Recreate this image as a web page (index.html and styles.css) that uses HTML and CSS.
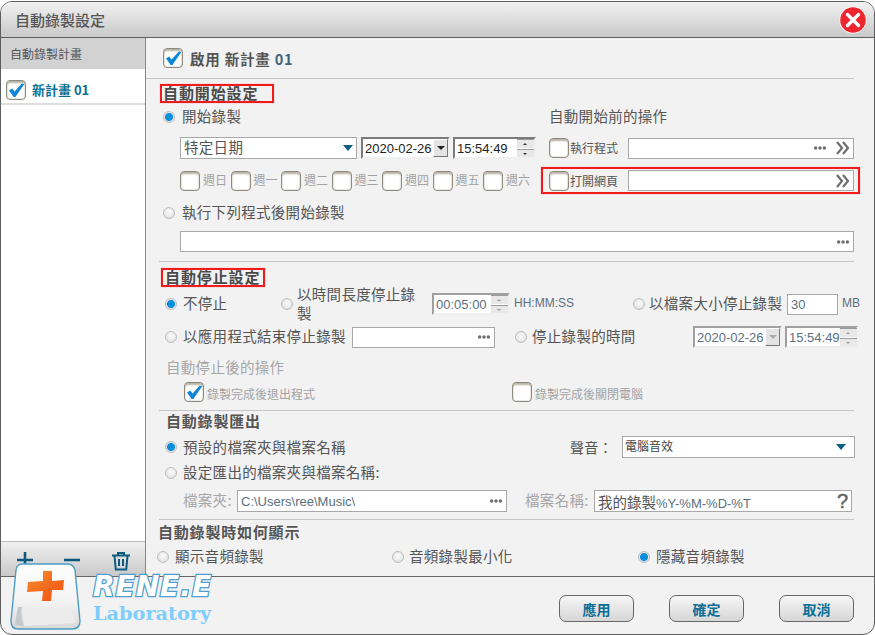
FILE: index.html
```html
<!DOCTYPE html>
<html lang="zh-Hant">
<head>
    <meta charset="UTF-8">
    <title>自動錄製設定</title>
    <link rel="stylesheet" href="styles.css">
</head>
<body>

<svg class="defs" width="0" height="0">
    <symbol id="tick" viewBox="0 0 20 20">
        <path d="M3 10.5 L6.2 8.5 L8.6 11.5 L15.8 3.6 L18.2 4.2 L9.4 17 L7.6 17 Z" fill="#0f86d6"/>
    </symbol>
    <symbol id="dots" viewBox="0 0 16 6">
        <circle cx="3" cy="3" r="2"/><circle cx="8" cy="3" r="2"/><circle cx="13" cy="3" r="2"/>
    </symbol>
    <symbol id="chevrons" viewBox="0 0 14 14">
        <path d="M1 1 L6 7 L1 13 M7 1 L12 7 L7 13" fill="none" stroke="#6e6e6e" stroke-width="2.2"/>
    </symbol>
</svg>

<div class="window">

    <div class="titlebar">
        <span class="title">自動錄製設定</span>
        <span class="close">
            <svg width="28" height="28" viewBox="0 0 28 28">
                <circle cx="14" cy="14" r="13.5" fill="#fff"/>
                <circle cx="14" cy="14" r="12.8" fill="#f0262e"/>
                <path d="M8.5 8.5 L19.5 19.5 M19.5 8.5 L8.5 19.5" stroke="#fff" stroke-width="3.4" stroke-linecap="round"/>
            </svg>
        </span>
    </div>

    <div class="content">

        <!-- Plan list -->
        <div class="sidebar">
            <div class="side-head">自動錄製計畫</div>
            <div class="plan">
                <span class="check"><svg><use href="#tick"/></svg></span>
                <span class="plan-name">新計畫 01</span>
            </div>
            <div class="side-tools">
                <svg class="tool-plus" width="18" height="18" viewBox="0 0 18 18"><path d="M9 1 V17 M1 9 H17" stroke="#0c5a7e" stroke-width="2.6"/></svg>
                <svg class="tool-minus" width="18" height="18" viewBox="0 0 18 18"><path d="M1 9 H17" stroke="#0c5a7e" stroke-width="2.6"/></svg>
                <svg class="tool-trash" width="20" height="20" viewBox="0 0 20 20"><path d="M1 4.5 H19 M7 4 V2 H13 V4 M3.5 5 L4.8 18.5 H15.2 L16.5 5 M8 8 V15 M12 8 V15" fill="none" stroke="#0c5a7e" stroke-width="2"/></svg>
            </div>
        </div>

        <div class="main">

            <div class="enable-row">
                <span class="check"><svg><use href="#tick"/></svg></span>
                <span class="enable-text">啟用 新計畫 <em>01</em></span>
            </div>

            <!-- Auto start -->
            <div class="heading heading-start"><span>自動開始設定</span></div>

            <div class="start-row">
                <span class="radio on"></span>
                <span class="start-label">開始錄製</span>
                <span>自動開始前的操作</span>
            </div>

            <div class="date-row">
                <div class="select select-date"><span>特定日期</span><i class="arrow"></i></div>
                <div class="field date"><span>2020-02-26</span><b class="drop"><i></i></b></div>
                <div class="field time"><span>15:54:49</span><b class="spin"><i class="up"></i><i class="down"></i></b></div>
                <div class="action">
                    <span class="check"></span>
                    <span class="action-label">執行程式</span>
                    <div class="input">
                        <svg class="dots"><use href="#dots"/></svg>
                        <svg class="chevrons"><use href="#chevrons"/></svg>
                    </div>
                </div>
            </div>

            <div class="week-row">
                <div class="week">
                    <div class="day"><span class="check"></span><span>週日</span></div>
                    <div class="day"><span class="check"></span><span>週一</span></div>
                    <div class="day"><span class="check"></span><span>週二</span></div>
                    <div class="day"><span class="check"></span><span>週三</span></div>
                    <div class="day"><span class="check"></span><span>週四</span></div>
                    <div class="day"><span class="check"></span><span>週五</span></div>
                    <div class="day"><span class="check"></span><span>週六</span></div>
                </div>
                <div class="action action-marked">
                    <span class="check"></span>
                    <span class="action-label">打開網頁</span>
                    <div class="input">
                        <svg class="chevrons"><use href="#chevrons"/></svg>
                    </div>
                </div>
            </div>

            <div class="after-row">
                <span class="radio"></span>
                <span>執行下列程式後開始錄製</span>
            </div>

            <div class="input after-input"><svg class="dots"><use href="#dots"/></svg></div>

            <hr class="rule rule-stop">

            <!-- Auto stop -->
            <div class="heading heading-stop"><span>自動停止設定</span></div>

            <div class="stop-row">
                <span class="radio on"></span>
                <span>不停止</span>
                <span class="radio"></span>
                <span class="wrap-label">以時間長度停止錄製</span>
                <div class="field length disabled"><span>00:05:00</span><b class="spin"><i class="up"></i><i class="down"></i></b></div>
                <span class="unit">HH:MM:SS</span>
                <span class="radio"></span>
                <span>以檔案大小停止錄製</span>
                <div class="input size">30</div>
                <span class="unit">MB</span>
            </div>

            <div class="stop-row2">
                <span class="radio"></span>
                <span>以應用程式結束停止錄製</span>
                <div class="input"><svg class="dots"><use href="#dots"/></svg></div>
                <span></span>
                <span class="radio"></span>
                <span>停止錄製的時間</span>
                <div class="field date disabled"><span>2020-02-26</span><b class="drop"><i></i></b></div>
                <div class="field time-small disabled"><span>15:54:49</span><b class="spin"><i class="up"></i><i class="down"></i></b></div>
            </div>

            <div class="after-stop">自動停止後的操作</div>

            <div class="quit-row">
                <div class="quit quit-exit">
                    <span class="check"><svg><use href="#tick"/></svg></span>
                    <span>錄製完成後退出程式</span>
                </div>
                <div class="quit">
                    <span class="check"></span>
                    <span>錄製完成後關閉電腦</span>
                </div>
            </div>

            <hr class="rule rule-export">

            <!-- Export -->
            <div class="heading2 heading-export">自動錄製匯出</div>

            <div class="export-row">
                <span class="radio on"></span>
                <span>預設的檔案夾與檔案名稱</span>
                <span class="sound-label">聲音：</span>
                <div class="select select-sound"><span>電腦音效</span><i class="arrow"></i></div>
            </div>

            <div class="export-row2">
                <span class="radio"></span>
                <span>設定匯出的檔案夾與檔案名稱:</span>
            </div>

            <div class="path-row">
                <span class="muted">檔案夾:</span>
                <div class="input path"><span>C:\Users\ree\Music\</span><svg class="dots"><use href="#dots"/></svg></div>
                <span class="muted">檔案名稱:</span>
                <div class="input path"><span><span class="name-cjk">我的錄製</span>%Y-%M-%D-%T</span><b class="help">?</b></div>
            </div>

            <hr class="rule rule-show">

            <!-- Display -->
            <div class="heading2 heading-show">自動錄製時如何顯示</div>

            <div class="show-row">
                <span class="radio"></span>
                <span>顯示音頻錄製</span>
                <span class="radio"></span>
                <span>音頻錄製最小化</span>
                <span class="radio on"></span>
                <span>隱藏音頻錄製</span>
            </div>

        </div>
    </div>

    <div class="footer">
        <button>應用</button>
        <button>確定</button>
        <button>取消</button>
    </div>

    <!-- Watermark over the corner -->
    <div class="logo">
        <svg class="logo-key" width="72" height="68" viewBox="0 0 72 68">
            <defs>
                <linearGradient id="cap" x1="0" y1="0" x2="0" y2="1">
                    <stop offset="0" stop-color="#ffffff"/>
                    <stop offset="0.6" stop-color="#f2f2f2"/>
                    <stop offset="1" stop-color="#d8d8d8"/>
                </linearGradient>
                <linearGradient id="plus" x1="0" y1="0" x2="1" y2="1">
                    <stop offset="0" stop-color="#f98a2e"/>
                    <stop offset="1" stop-color="#ee4f12"/>
                </linearGradient>
            </defs>
            <path d="M12 1 H58 Q63 1 65 7 L70 58 Q70 66 62 66 H8 Q1 66 1 58 L6 7 Q7 1 12 1 Z" fill="url(#cap)" stroke="#4c9cc6" stroke-width="1.4"/>
            <path d="M8 44 Q6 54 5 62 L14 63 Q10 52 12 44 Z" fill="#c4c8cc"/>
            <path d="M12 44 Q36 50 61 44 L66 60 L14 63 Z" fill="#ececec"/>
            <path d="M33 8 H42 V18 L54 17 L53 27 H42 L41 38 H32 L33 28 L17 29 L18 19 L33 18 Z" fill="url(#plus)"/>
        </svg>
        <div class="logo-text">
            <div class="logo-name">RENE.E</div>
            <div class="logo-lab">Laboratory</div>
        </div>
    </div>

</div>

</body>
</html>
```

FILE: styles.css
```css
* {
    box-sizing: border-box;
}

html, body {
    margin: 0;
    background-color: #fff;
}

body {
    padding-top: 1px;
    font-family: "Noto Sans CJK TC", "Liberation Sans", sans-serif;
    font-size: 14.5px;
    color: #555;
}

.defs {
    position: absolute;
}

.window {
    position: relative;
    width: 875px;
    height: 634px;
    border: 1px solid #5e5e5e;
    border-radius: 12px;
    background-color: #f2f2f2;
    overflow: hidden;
}

.titlebar {
    display: flex;
    align-items: center;
    justify-content: space-between;
    height: 36px;
    padding: 0 7px 0 14px;
    background: linear-gradient(#f1f1f1, #c9c9c9);
    border-bottom: 1px solid #5e5e5e;
}

.title {
    font-size: 15px;
    font-weight: 500;
    color: #555;
}

.close {
    display: flex;
}

.content {
    display: flex;
    height: 538px;
}

/* sidebar */
.sidebar {
    display: flex;
    flex-direction: column;
    width: 145px;
    background-color: #fff;
    border-right: 1px solid #888;
}

.side-head {
    height: 31px;
    padding-left: 9px;
    line-height: 31px;
    font-size: 12px;
    background-color: #d2d2d2;
}

.plan {
    display: flex;
    align-items: center;
    gap: 6px;
    height: 36px;
    padding: 7px 0 0 5px;
    border-bottom: 2px solid #dedede;
}

.plan-name {
    font-size: 13px;
    font-weight: 700;
    color: #0c6f96;
}

.side-tools {
    display: flex;
    margin-top: auto;
    height: 35px;
    padding: 9px 0 0 15px;
    background: linear-gradient(#f0f0f0, #c9c9c9);
    border-top: 1px solid #bbb;
}

.tool-minus {
    margin-left: 29px;
}

.tool-trash {
    margin-left: 30px;
}

/* main panel */
.main {
    width: 728px;
    letter-spacing: 0.3px;
}

.enable-row {
    display: flex;
    align-items: center;
    gap: 7px;
    height: 41px;
    width: 708px;
    padding-left: 17px;
    border-bottom: 1px solid #c6c6c6;
}

.enable-text {
    font-size: 14.5px;
    font-weight: 700;
    letter-spacing: 0.8px;
    color: #555;
}

.enable-text em {
    font-style: normal;
    color: #41647a;
}

.rule {
    height: 1px;
    width: 695px;
    margin-left: 13px;
    margin-right: 0;
    border: 0;
    background-color: #c6c6c6;
}

.rule-stop {
    margin-top: 9px;
    margin-bottom: 0;
}

.rule-export {
    margin-top: 8px;
    margin-bottom: 0;
}

.rule-show {
    margin-top: 7px;
    margin-bottom: 0;
}

.heading {
    height: 19px;
    font-size: 15px;
    font-weight: 700;
    line-height: 13px;
    letter-spacing: 0.9px;
    color: #4a4a4a;
    border: 2px solid #f01c1c;
    box-shadow: 0 0 1px #f58a8a;
}

.heading-start {
    width: 114px;
    margin: 5px 0 0 14px;
    padding-left: 1px;
}

.heading-stop {
    width: 104px;
    margin: 6px 0 0 15px;
    padding-left: 2px;
}

.heading2 {
    height: 20px;
    font-size: 15px;
    font-weight: 700;
    line-height: 18px;
    letter-spacing: 0.8px;
    color: #555;
}

.heading-export {
    margin: 1px 0 0 20px;
}

.heading-show {
    margin: 3px 0 0 12px;
}

/* radios and checks */
.radio {
    width: 12px;
    height: 12px;
    border-radius: 50%;
    border: 1px solid #bdbdbd;
    background: radial-gradient(circle at 50% 40%, #fbfbfb, #dcdcdc);
}

.radio.on {
    background: radial-gradient(circle, #0a8fe0 0, #0a8fe0 3.6px, #e6e6e6 4.4px);
}

.check {
    display: block;
    flex: none;
    width: 20px;
    height: 20px;
    border: 1px solid #8f8a7e;
    border-radius: 4px;
    background-color: #fff;
    box-shadow: inset 0 2px 2px #b5b0a4, inset 0 -1px 1px #e8e8e8;
}

.check svg {
    display: block;
    width: 20px;
    height: 20px;
    margin: -1px 0 0 -1px;
}

/* text sits a little low in its line box, lift it to the control's centre */
.start-row > span,
.after-row > span,
.stop-row > span,
.stop-row2 > span,
.export-row2 > span,
.show-row > span,
.path-row > .muted,
.select > span,
.day > span {
    padding-bottom: 3px;
}

.export-row > span,
.action-label {
    padding-bottom: 1px;
}

.quit > span {
    padding-top: 2px;
}

.radio,
.start-row > .radio,
.after-row > .radio,
.stop-row > .radio,
.stop-row2 > .radio,
.export-row > .radio,
.export-row2 > .radio,
.show-row > .radio,
.day > .check,
.quit > .check {
    padding: 0;
}

/* form fields */
.input {
    display: flex;
    align-items: center;
    justify-content: flex-end;
    height: 21px;
    padding: 0 3px;
    font-size: 13px;
    letter-spacing: 0;
    color: #5c6f80;
    background-color: #fff;
    border: 1px solid #a8a8a8;
}

.dots {
    flex: none;
    width: 14px;
    height: 6px;
    fill: #6e6e6e;
}

.chevrons {
    flex: none;
    width: 14px;
    height: 14px;
    margin-left: 9px;
}

.select {
    display: flex;
    align-items: center;
    justify-content: space-between;
    background-color: #fff;
    border: 1px solid #a8a8a8;
}

.arrow {
    width: 0;
    height: 0;
    border-left: 5px solid transparent;
    border-right: 5px solid transparent;
    border-top: 6px solid #0c5f86;
}

.select-date {
    width: 177px;
    height: 22px;
    padding: 0 3px;
    font-size: 14.5px;
}

.select-sound {
    width: 233px;
    height: 22px;
    padding: 0 8px 0 2px;
    font-size: 12px;
    letter-spacing: 0;
    color: #444;
}

.field {
    display: flex;
    align-items: center;
    height: 22px;
    padding-left: 2px;
    font-family: "Liberation Sans", sans-serif;
    font-size: 13px;
    letter-spacing: 0;
    white-space: nowrap;
    color: #222;
    background-color: #fff;
    border: 2px solid #f0f0f0;
    border-top-color: #7b7b7b;
    border-left-color: #7b7b7b;
}

.field.disabled {
    color: #5c6f80;
    border-top-color: #a0a0a0;
    border-left-color: #a0a0a0;
}

.drop {
    display: flex;
    align-items: center;
    justify-content: center;
    width: 15px;
    height: 100%;
    margin-left: auto;
    background-color: #e4e4e4;
    border: 1px solid #fff;
    border-right-color: #777;
    border-bottom-color: #777;
}

.drop i {
    border-left: 4px solid transparent;
    border-right: 4px solid transparent;
    border-top: 4px solid #222;
}

.field.disabled .drop i {
    border-top-color: #aaa;
}

.spin {
    display: flex;
    flex-direction: column;
    flex: none;
    width: 17px;
    height: 100%;
    margin-left: auto;
    gap: 1px;
}

.spin i {
    position: relative;
    display: block;
    flex: 1;
    background-color: #e8e8e8;
    border-top: 1px solid #9a9a9a;
}

.spin i::after {
    content: "";
    position: absolute;
    left: 6px;
    top: 3px;
    border-left: 2px solid transparent;
    border-right: 2px solid transparent;
}

.spin .up::after {
    border-bottom: 2px solid #333;
}

.spin .down::after {
    border-top: 2px solid #333;
}

.field.disabled .spin .up::after {
    border-bottom-color: #999;
}

.field.disabled .spin .down::after {
    border-top-color: #999;
}

.date {
    width: 89px;
}

.time {
    width: 83px;
}

.length {
    width: 78px;
}

.time-small {
    width: 73px;
    margin-left: 3px;
}

.action {
    display: flex;
    align-items: center;
}

.action-label {
    width: 59px;
    padding-left: 1px;
    font-size: 12px;
    letter-spacing: 0;
    color: #555;
}

.action .input {
    flex: 1;
}

/* rows */
.start-row {
    display: grid;
    grid-template-columns: 19px 367px auto;
    align-items: center;
    align-content: center;
    height: 28px;
    padding-left: 17px;
}

.date-row {
    display: flex;
    align-items: center;
    gap: 3px;
    height: 22px;
    margin-top: 6px;
    padding-left: 34px;
}

.date-row .select-date {
    margin-right: 1px;
}

.date-row .action {
    width: 305px;
    margin-left: 10px;
}

.week-row {
    display: flex;
    align-items: center;
    height: 27px;
    margin-top: 8px;
    padding-left: 34px;
}

.week {
    display: grid;
    grid-template-columns: repeat(7, 50.5px);
}

.day {
    display: flex;
    align-items: center;
    gap: 3px;
    font-size: 12px;
    letter-spacing: 0;
    color: #a2a2a2;
}

.action-marked {
    width: 319px;
    height: 27px;
    margin-left: 7.5px;
    padding: 0 4px 0 6px;
    border: 2px solid #f01c1c;
    box-shadow: 0 0 1px #f58a8a;
}

.after-row {
    display: grid;
    grid-template-columns: 19px auto;
    align-items: center;
    align-content: center;
    height: 28px;
    margin-top: 5px;
    padding-left: 17px;
}

.after-input {
    width: 674px;
    margin: 4px 0 0 34px;
}

.stop-row {
    display: grid;
    grid-template-columns: 18px 98px 16px 135px 78px 123px 16px 138px 51px auto;
    grid-template-rows: 22px;
    align-items: center;
    height: 22px;
    margin-top: 6px;
    padding-left: 19px;
}

.wrap-label {
    width: 125px;
    line-height: 19px;
}

.unit {
    padding-left: 4px;
    font-family: "Liberation Sans", sans-serif;
    font-size: 12px;
    letter-spacing: 0;
    color: #5c6f80;
}

.size {
    justify-content: flex-start;
    font-family: "Liberation Sans", sans-serif;
}

.stop-row2 {
    display: grid;
    grid-template-columns: 18px 169px 143px 20px 17px 161px 89px auto;
    grid-template-rows: 22px;
    align-items: center;
    height: 22px;
    margin-top: 11px;
    padding-left: 19px;
}

.after-stop {
    height: 20px;
    margin: 10px 0 0 20px;
    line-height: 18px;
    color: #a6a6a6;
}

.quit-row {
    display: grid;
    grid-template-columns: 328px auto;
    height: 20px;
    margin: 4px 0 0 38px;
}

.quit {
    display: flex;
    align-items: center;
    gap: 3px;
    font-size: 12px;
    letter-spacing: 0;
    color: #a2a2a2;
}

.export-row {
    display: grid;
    grid-template-columns: 18px 387px 52px auto;
    grid-template-rows: 22px;
    align-items: center;
    height: 22px;
    margin-top: 4px;
    padding-left: 19px;
}

.export-row2 {
    display: grid;
    grid-template-columns: 18px auto;
    grid-template-rows: 20px;
    align-items: center;
    height: 20px;
    margin-top: 5px;
    padding-left: 19px;
}

.sound-label {
    font-size: 14px;
}

.path-row {
    display: grid;
    grid-template-columns: 54px 270px 87px 258px;
    grid-template-rows: 22px;
    align-items: center;
    height: 22px;
    margin-top: 7px;
    padding-left: 37px;
}

.path-row > .muted:nth-child(3) {
    padding-left: 18px;
}

.muted {
    color: #a6a6a6;
    white-space: nowrap;
}

.path {
    justify-content: space-between;
    height: 22px;
    font-family: "Liberation Sans", sans-serif;
}

.name-cjk {
    font-family: "Noto Sans CJK TC", sans-serif;
    font-size: 14.5px;
    color: #555;
}

.help {
    font-size: 20px;
    font-weight: 400;
    line-height: 20px;
    -webkit-text-stroke: 0.5px #666;
    color: #666;
}

.show-row {
    display: grid;
    grid-template-columns: 18px 217px 17px 229px 18px auto;
    grid-template-rows: 20px;
    align-items: center;
    height: 20px;
    margin-top: 4px;
    padding-left: 11px;
}

/* footer */
.footer {
    display: flex;
    justify-content: flex-end;
    gap: 35px;
    height: 58px;
    padding: 18px 20px 0 0;
    border-top: 1px solid #666;
}

button {
    width: 75px;
    height: 27px;
    font-family: inherit;
    font-size: 14px;
    font-weight: 700;
    color: #0c6f96;
    background: linear-gradient(#f6f6f6, #d6d6d6);
    border: 1px solid #666;
    border-radius: 7px;
}

/* watermark */
.logo {
    position: absolute;
    left: 9px;
    top: 561px;
    display: flex;
}

.logo-text {
    margin: 9px 0 0 11px;
}

.logo-name {
    height: 29px;
    font-family: "DejaVu Sans", sans-serif;
    font-size: 28px;
    font-weight: 700;
    font-style: italic;
    line-height: 29px;
    letter-spacing: 1px;
    color: #fff;
    -webkit-text-stroke: 2.6px #4f9fd0;
    paint-order: stroke fill;
}

.logo-lab {
    font-family: "DejaVu Serif", serif;
    font-size: 19.3px;
    font-weight: 700;
    line-height: 25px;
    color: #7fcdfb;
}
```
